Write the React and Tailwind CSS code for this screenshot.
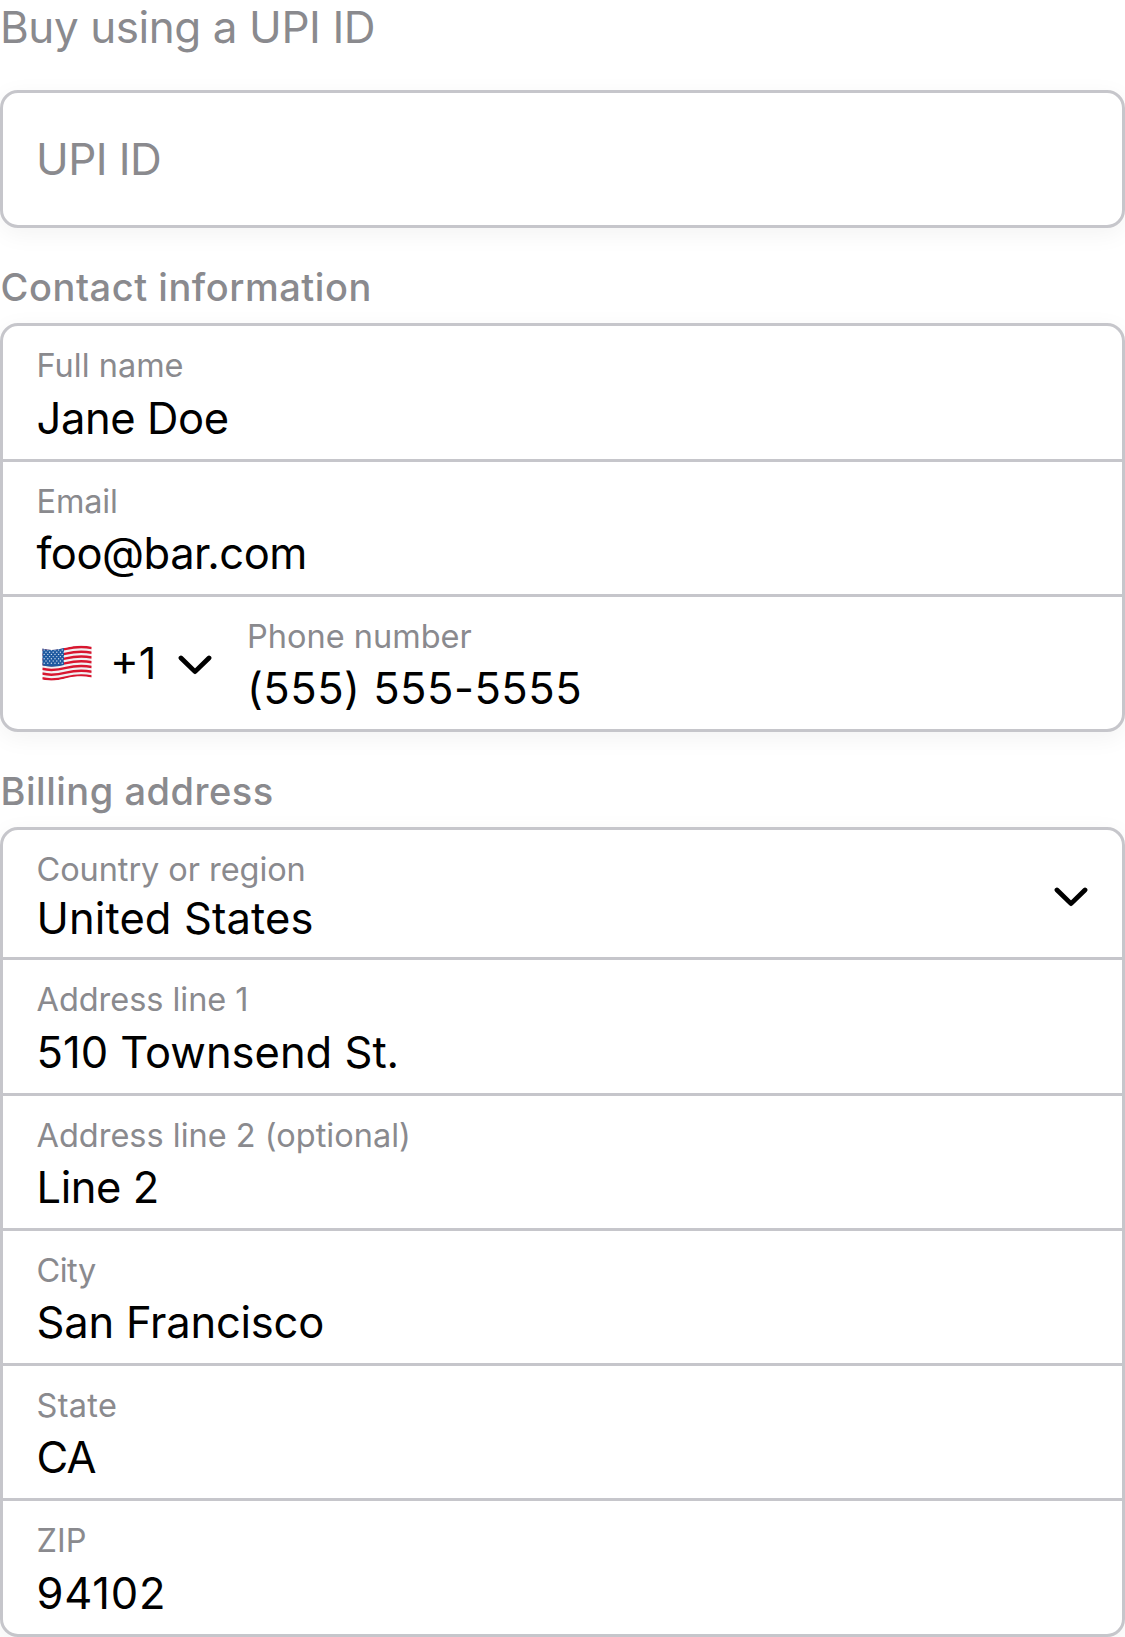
import React from "react";

const card =
  "border-[3px] border-[#c6c6cb] rounded-[18px] bg-white shadow-[0_6px_24px_rgba(0,0,0,0.05)]";

function Chevron() {
  return (
    <svg width="34" height="20" viewBox="0 0 34 20" fill="none" className="block shrink-0">
      <path
        d="M3 3 L17 16.6 L31 3"
        stroke="black"
        strokeWidth="4.8"
        strokeLinecap="round"
        strokeLinejoin="round"
      />
    </svg>
  );
}

function Flag() {
  const stripes = [0, 1, 2, 3, 4, 5, 6];
  const stars = [];
  for (let r = 0; r < 7; r++) {
    for (let c = 0; c < 6; c++) {
      stars.push([2.2 + c * 3.6 + (r % 2 ? 1.8 : 0), 5 + r * 2.2]);
    }
  }
  return (
    <svg width="50" height="36" viewBox="0 0 50 36" className="block shrink-0">
      <defs>
        <clipPath id="cloth">
          <path d="M0.5 3.6 C9 6.2 16 4.6 24 2.6 C33 0.2 41 0 49.5 1.6 V32.4 C41 30.6 33 31 24 33.2 C16 35.4 9 36.4 0.5 34.8 Z" />
        </clipPath>
        <clipPath id="canton">
          <path d="M0.5 3.6 C8 6 15 5 22 3.1 V20 C15 21.8 8 22.4 0.5 20.6 Z" />
        </clipPath>
      </defs>
      <g clipPath="url(#cloth)">
        <rect width="50" height="36" fill="#f1f1f3" />
        {stripes.map((i) => (
          <path
            key={i}
            transform={`translate(0 ${i * 4.75})`}
            d="M0 4.8 C9 7.2 16 6 24 3.9 C33 1.5 41 1.2 50 2.9"
            stroke="#d8162f"
            strokeWidth="2.5"
            fill="none"
          />
        ))}
      </g>
      <g clipPath="url(#canton)">
        <rect width="23" height="24" fill="#1f5aa0" />
        {stars.map(([x, y], i) => (
          <circle key={i} cx={x} cy={y} r="0.7" fill="#cddcee" />
        ))}
      </g>
    </svg>
  );
}

function Label({ children, track = "" }) {
  return (
    <div className={`h-10 whitespace-nowrap text-[32.5px] leading-[40px] text-[#8a8a8e] ${track}`}>
      {children}
    </div>
  );
}

function Value({ children, track = "", gap = "mt-[6px]" }) {
  return (
    <div className={`h-[50px] whitespace-nowrap text-[43.5px] leading-[50px] text-black ${track} ${gap}`}>
      {children}
    </div>
  );
}

function Row({ height, last, children }) {
  return (
    <div className={`flex ${height} ${last ? "" : "border-b-[3px] border-[#c6c6cb]"}`}>
      {children}
    </div>
  );
}

function Field({ label, value, labelTrack, valueTrack, gap, inset = "pl-[33.5px]" }) {
  return (
    <div className={`pt-[20px] ${inset}`}>
      <Label track={labelTrack}>{label}</Label>
      <Value track={valueTrack} gap={gap}>
        {value}
      </Value>
    </div>
  );
}

function Heading({ children, track }) {
  return (
    <h2 className={`mt-[35px] h-[48px] shrink-0 pl-[0.6px] text-[38px] leading-[48px] font-medium whitespace-nowrap text-[#8a8a8e] ${track}`}>
      {children}
    </h2>
  );
}

export default function App() {
  return (
    <main className="flex h-[1637px] w-[1125px] flex-col overflow-hidden bg-white font-['Inter',sans-serif]">
      <h1 className="mt-[2px] h-[50px] shrink-0 text-[44px] leading-[50px] font-normal tracking-[-0.43px] whitespace-nowrap text-[#8a8a8e]">
        Buy using a UPI ID
      </h1>
      <div className={`mt-[38px] flex h-[138px] shrink-0 items-center pl-[33px] ${card}`}>
        <div className="text-[44px] leading-[50px] tracking-[-0.55px] text-[#8a8a8e]">UPI ID</div>
      </div>

      <Heading track="tracking-[0.54px]">Contact information</Heading>
      <section className={`mt-[12px] shrink-0 ${card}`}>
        <Row height="h-[136px]">
          <Field label="Full name" value="Jane Doe" valueTrack="tracking-[-0.4px]" gap="mt-[7px]" />
        </Row>
        <Row height="h-[135px]">
          <Field label="Email" value="foo@bar.com" labelTrack="tracking-[-0.15px]" valueTrack="tracking-[-0.48px]" />
        </Row>
        <Row height="h-[132px]" last>
          <div className="flex w-[244px] shrink-0 items-center pl-[39px]">
            <Flag />
            <span className="ml-[18px] w-[46px] text-[43.5px] leading-[50px]">+1</span>
            <div className="mt-[4px] ml-[22px]">
              <Chevron />
            </div>
          </div>
          <Field label="Phone number" value="(555) 555-5555" inset="pl-0" valueTrack="tracking-[0.48px]" />
        </Row>
      </section>

      <Heading track="tracking-[0.5px]">Billing address</Heading>
      <section className={`mt-[12px] shrink-0 ${card}`}>
        <Row height="h-[130px]">
          <Field
            label="Country or region"
            value="United States"
            labelTrack="tracking-[-0.07px]"
            valueTrack="tracking-[0.12px]"
            gap="mt-[3px]"
          />
          <div className="mt-[6px] mr-[34px] ml-auto self-center">
            <Chevron />
          </div>
        </Row>
        <Row height="h-[136px]">
          <Field label="Address line 1" value="510 Townsend St." labelTrack="tracking-[-0.04px]" gap="mt-[7px]" />
        </Row>
        <Row height="h-[135px]">
          <Field label="Address line 2 (optional)" value="Line 2" valueTrack="tracking-[-0.45px]" />
        </Row>
        <Row height="h-[135px]">
          <Field label="City" value="San Francisco" labelTrack="tracking-[-0.5px]" valueTrack="tracking-[-0.22px]" />
        </Row>
        <Row height="h-[135px]">
          <Field label="State" value="CA" labelTrack="tracking-[0.3px]" valueTrack="tracking-[-1px]" />
        </Row>
        <Row height="h-[133px]" last>
          <Field label="ZIP" value="94102" valueTrack="tracking-[0.8px]" gap="mt-[7px]" />
        </Row>
      </section>
    </main>
  );
}
